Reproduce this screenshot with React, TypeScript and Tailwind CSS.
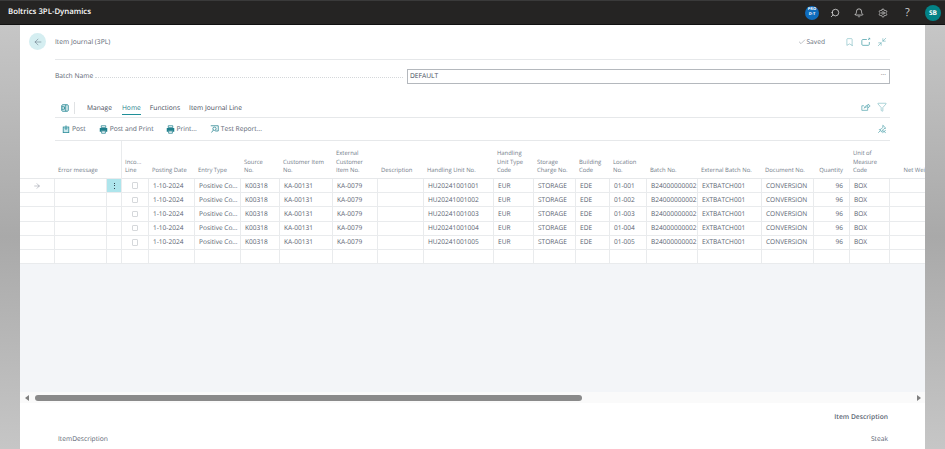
import React from 'react';
import { ArrowLeft, ArrowRight, Bell, Bookmark, Check, Filter, Minimize2, Search, Settings } from 'lucide-react';

const gridCols =
  'grid-cols-[35px_52px_15px_27px_46px_46px_39px_53px_45px_46px_70px_40px_42px_34px_37px_51px_64px_52px_36px_40px_51px]';

const headers: { lines: string[]; right?: boolean }[] = [
  { lines: [''] },
  { lines: ['Error message'] },
  { lines: [''] },
  { lines: ['Inco...', 'Line'] },
  { lines: ['Posting Date'] },
  { lines: ['Entry Type'] },
  { lines: ['Source', 'No.'] },
  { lines: ['Customer Item', 'No.'] },
  { lines: ['External', 'Customer', 'Item No.'] },
  { lines: ['Description'] },
  { lines: ['Handling Unit No.'] },
  { lines: ['Handling', 'Unit Type', 'Code'] },
  { lines: ['Storage', 'Charge No.'] },
  { lines: ['Building', 'Code'] },
  { lines: ['Location', 'No.'] },
  { lines: ['Batch No.'] },
  { lines: ['External Batch No.'] },
  { lines: ['Document No.'] },
  { lines: ['Quantity'], right: true },
  { lines: ['Unit of', 'Measure', 'Code'] },
  { lines: ['Net Weight'], right: true },
];

const rows = ['001', '002', '003', '004', '005'];

function Grip() {
  return (
    <span className="flex flex-col gap-[1.5px]">
      <span className="w-[1px] h-[1px] bg-[#33464f]" />
      <span className="w-[1px] h-[1px] bg-[#33464f]" />
      <span className="w-[1px] h-[1px] bg-[#33464f]" />
    </span>
  );
}

function Cell({ children, right, className = '' }: { children?: React.ReactNode; right?: boolean; className?: string }) {
  return (
    <div
      className={`h-[14.2px] flex items-center overflow-hidden whitespace-nowrap border-r border-b border-[#e9ebed] text-[6.55px] text-[#5a6472] ${
        right ? 'justify-end pr-[6px]' : 'pl-[4px]'
      } ${className}`}
    >
      {children}
    </div>
  );
}

function PrintIcon({ className = '' }: { className?: string }) {
  return (
    <svg viewBox="0 0 12 12" className={`w-[9px] h-[9px] ${className}`}>
      <path d="M3 1h6v2.5H3z" fill="none" stroke="#1f7f8c" strokeWidth="1" />
      <path d="M1 4h10v5H9V7.5H3V9H1z" fill="#1f7f8c" />
      <path d="M3.5 8h5v3h-5z" fill="none" stroke="#1f7f8c" strokeWidth="1" />
    </svg>
  );
}

function ShareIcon() {
  return (
    <svg viewBox="0 0 12 12" className="w-[10px] h-[10px]" fill="none" stroke="#5aa8b1" strokeWidth="0.9">
      <path d="M8 6.5V10H1V4.5h2.5" />
      <path d="M4 7.5C4.5 5 6 4 8.5 4V2.5L11 4.8 8.5 7V5.6C6.5 5.6 5 6.2 4 7.5z" />
    </svg>
  );
}

function OpenNewIcon() {
  return (
    <svg viewBox="0 0 12 12" className="w-[10px] h-[10px]" fill="none" stroke="#5aa8b1" strokeWidth="1">
      <path d="M7 3H2.2C1.5 3 1 3.5 1 4.2v4.6C1 9.5 1.5 10 2.2 10h6.6c.7 0 1.2-.5 1.2-1.2V6" />
      <path d="M8.5 3.5L10.5 1.5M9 1.5h1.5V3" />
    </svg>
  );
}

function PinOff() {
  return (
    <svg viewBox="0 0 12 12" className="w-[10px] h-[10px]" fill="none" stroke="#5aa8b1" strokeWidth="0.9">
      <path d="M7 1.5l3.5 3.5-2 .6-2.2 2.2-.4 2L2.8 6.7l2-.4L7 4z" />
      <path d="M1.5 10.5l2.7-2.7" />
      <path d="M6.5 7.5l4 3M10.5 7.5l-4 3" />
    </svg>
  );
}

export default function App() {
  return (
    <div className="w-[945px] h-[449px] overflow-hidden flex flex-col font-['Open_Sans',sans-serif] antialiased [text-rendering:geometricPrecision] bg-white">
      {/* Top bar */}
      <div className="h-[25px] shrink-0 bg-[#252423] border-t border-[#3a3a3a] border-b border-b-[#111] flex items-center pl-[8px] pr-[4px] text-white">
        <span className="text-[7.8px] font-semibold">Boltrics 3PL-Dynamics</span>
        <div className="ml-auto flex items-center">
          <div className="w-[14px] h-[14px] rounded-full bg-[#0f6cbd] flex flex-col items-center justify-center text-[4px] leading-[4.5px] font-bold">
            <span>PRO</span>
            <span>D-T</span>
          </div>
          <Search className="ml-[11px] w-[10px] h-[10px] -scale-x-100" strokeWidth={1.6} />
          <Bell className="ml-[14px] w-[10px] h-[10px]" strokeWidth={1.6} />
          <Settings className="ml-[14px] w-[10px] h-[10px] text-[#d0d0d0]" strokeWidth={1.8} />
          <span className="ml-[17px] w-[8px] text-[11px] leading-none text-[#d0d0d0]">?</span>
          <div className="ml-[12px] w-[16px] h-[16px] rounded-full bg-[#038387] flex items-center justify-center text-[6.5px] font-bold">
            SB
          </div>
        </div>
      </div>

      <div className="flex-1 flex min-h-0">
        <div className="w-[20px] shrink-0 bg-gradient-to-b from-[#c6c6c6] via-[#a9a9a9] to-[#c6c6c6]" />

        {/* Page */}
        <div className="flex-1 min-w-0 bg-white flex flex-col overflow-hidden text-[#5a6472]">
          <div className="px-[35px]">
            <div className="relative h-[35px] flex items-center border-b border-[#e6e8ea] text-[6.7px]">
              <div className="absolute -left-[26px] top-[8px] w-[17px] h-[17px] rounded-full bg-[#d5eef1] flex items-center justify-center">
                <ArrowLeft className="w-[10px] h-[10px] text-[#505c6d]" strokeWidth={1.1} />
              </div>
              <span>Item Journal (3PL)</span>
              <div className="ml-auto flex items-center">
                <Check className="w-[8px] h-[8px]" strokeWidth={1.2} />
                <span className="ml-[0.5px] text-[#6b7280]">Saved</span>
                <Bookmark className="ml-[20px] w-[9px] h-[10px] text-[#5aa8b1]" strokeWidth={1.3} />
                <span className="ml-[7px]">
                  <OpenNewIcon />
                </span>
                <Minimize2 className="ml-[6px] w-[10px] h-[10px] text-[#5aa8b1]" strokeWidth={1.3} />
                <span className="w-[3px]" />
              </div>
            </div>

            <div className="mt-[9px] flex items-center h-[15px] text-[6.7px]">
              <span className="whitespace-nowrap shrink-0">Batch Name</span>
              <span className="ml-[2px] flex-1 mr-[4px] border-b border-dotted border-[#d4d7da] mt-[1px]" />
              <div className="shrink-0 w-[483px] h-[15px] border-[1.5px] border-[#b4b8bd] flex items-center pl-[2px] pr-[3px] text-[#3f4a59]">
                <span>DEFAULT</span>
                <span className="ml-auto text-[#777] leading-none mt-[-2px]">···</span>
              </div>
            </div>

            <div className="mt-[15px] h-[19px] flex items-center border-b border-[#e6e8ea] text-[6.7px] pl-[6px]">
              <svg viewBox="0 0 10 10" className="w-[8px] h-[8px]" fill="none" stroke="#2a8b98" strokeWidth="1.2">
                <rect x="1" y="1" width="8" height="8" rx="1" />
                <path d="M1 3.5h3.5V6.5H1M6 1v8" />
              </svg>
              <span className="ml-[5px] h-[12px] w-px bg-[#e0e2e4]" />
              <span className="ml-[12px] text-[#3f4a59]">Manage</span>
              <span className="relative ml-[10px] text-[#1f7f8c]">
                Home
                <span className="absolute left-0 right-0 -bottom-[2px] h-[1px] bg-[#1f8f99]" />
              </span>
              <span className="ml-[9px] text-[#3f4a59]">Functions</span>
              <span className="ml-[9px] text-[#3f4a59]">Item Journal Line</span>
              <div className="ml-auto flex items-center pr-[3px] pb-[2px]">
                <ShareIcon />
                <Filter className="ml-[6px] w-[10px] h-[10px] text-[#5aa8b1]" strokeWidth={1.2} />
              </div>
            </div>

            <div className="h-[23px] flex items-center border-b border-[#e6e8ea] text-[6.7px] pl-[7px]">
              <svg viewBox="0 0 10 10" className="w-[8px] h-[8px]" fill="none" stroke="#2a8b98" strokeWidth="1">
                <rect x="1.5" y="2.5" width="7" height="7" fill="#c9e8ec" />
                <path d="M5 0.5v5M3.5 4L5 5.5 6.5 4" />
              </svg>
              <span className="ml-[2px]">Post</span>
              <PrintIcon className="ml-[13px]" />
              <span className="ml-[2px]">Post and Print</span>
              <PrintIcon className="ml-[12px]" />
              <span className="ml-[2px]">Print...</span>
              <svg viewBox="0 0 12 12" className="ml-[13px] w-[9px] h-[9px]" fill="none" stroke="#1f7f8c" strokeWidth="1">
                <path d="M1 1h10v7H7" />
                <circle cx="6" cy="5" r="2.2" />
                <path d="M4.4 6.8L2 10" />
              </svg>
              <span className="ml-[2px]">Test Report...</span>
              <div className="ml-auto pr-[3px]">
                <PinOff />
              </div>
            </div>
          </div>

          {/* Lines */}
          <div className="flex-1 min-h-0 bg-[#f3f5f8] overflow-hidden">
            <div className={`grid ${gridCols} w-[1000px] bg-white`}>
              {headers.map((h, i) => (
                <div
                  key={i}
                  className={`h-[38px] flex flex-col justify-end pb-[4px] border-b border-[#e6e8ea] text-[5.9px] leading-[8.2px] text-[#737d8a] whitespace-nowrap px-[3px] ${
                    h.right ? 'items-end pr-[7px]' : ''
                  } ${i === 2 ? 'border-r border-[#e9ebed]' : ''}`}
                >
                  {h.lines.map((l) => (
                    <span key={l}>{l}</span>
                  ))}
                </div>
              ))}
              {rows.map((n, i) => (
                <React.Fragment key={n}>
                  <Cell className="justify-center !pl-0">
                    {i === 0 && <ArrowRight className="w-[8px] h-[8px] text-[#6b7280]" strokeWidth={1.2} />}
                  </Cell>
                  <Cell />
                  <Cell className={i === 0 ? 'justify-center !pl-0 bg-[#aee5ec]' : ''}>{i === 0 && <Grip />}</Cell>
                  <Cell className="justify-center !pl-0">
                    <span className="w-[6.5px] h-[6.5px] border border-[#d5d8db] rounded-[1px]" />
                  </Cell>
                  <Cell>1-10-2024</Cell>
                  <Cell>Positive Co...</Cell>
                  <Cell>K00318</Cell>
                  <Cell>KA-00131</Cell>
                  <Cell>KA-0079</Cell>
                  <Cell />
                  <Cell>HU20241001{n}</Cell>
                  <Cell>EUR</Cell>
                  <Cell>STORAGE</Cell>
                  <Cell>EDE</Cell>
                  <Cell>01-{n}</Cell>
                  <Cell>B24000000002</Cell>
                  <Cell>EXTBATCH001</Cell>
                  <Cell>CONVERSION</Cell>
                  <Cell right>96</Cell>
                  <Cell>BOX</Cell>
                  <Cell />
                </React.Fragment>
              ))}
              {headers.map((_, i) => (
                <Cell key={i} />
              ))}
            </div>
          </div>

          {/* Scrollbar */}
          <div className="h-[11px] shrink-0 bg-[#fafafa] flex items-center pl-[5px] pr-[4px]">
            <span className="w-0 h-0 border-y-[3px] border-y-transparent border-r-[4px] border-r-[#7f7f7f]" />
            <span className="w-[547px] ml-[6px] h-[6px] rounded-full bg-[#8a8a8a]" />
            <span className="ml-auto w-0 h-0 border-y-[3px] border-y-transparent border-l-[4px] border-l-[#7f7f7f]" />
          </div>

          {/* Totals */}
          <div className="h-[46px] shrink-0 px-[37px] text-[6.7px]">
            <div className="mt-[9px] text-right font-semibold text-[#5a6472]">Item Description</div>
            <div className="mt-[12px] flex justify-between">
              <span className="ml-[1px]">ItemDescription</span>
              <span>Steak</span>
            </div>
          </div>
        </div>

        <div className="w-[20px] shrink-0 bg-gradient-to-b from-[#c6c6c6] via-[#a9a9a9] to-[#c6c6c6]" />
      </div>
    </div>
  );
}
